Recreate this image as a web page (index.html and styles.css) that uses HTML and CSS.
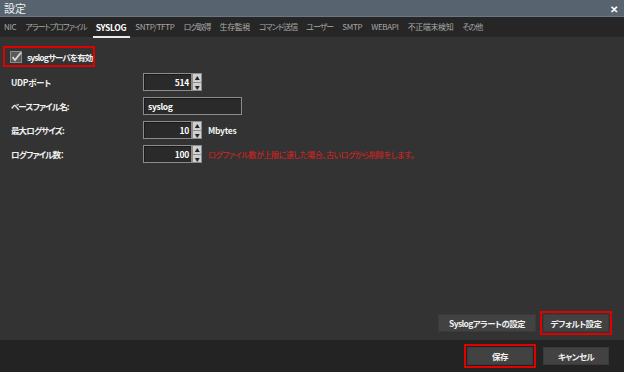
FILE: index.html
```html
<!DOCTYPE html>
<html lang="ja">
<head>
    <meta charset="UTF-8">
    <title>設定</title>
    <link rel="stylesheet" href="styles.css">
</head>
<body>
    <div class="dialog">
        <div class="titlebar">
            <span class="title">設定</span>
            <span class="close">✕</span>
        </div>
        <div class="tabs">
            <span class="tab">NIC</span>
            <span class="tab jp">アラートプロファイル</span>
            <span class="tab active">SYSLOG</span>
            <span class="tab">SNTP/TFTP</span>
            <span class="tab jp">ログ取得</span>
            <span class="tab kanji">生存監視</span>
            <span class="tab jp">コマンド送信</span>
            <span class="tab jp">ユーザー</span>
            <span class="tab">SMTP</span>
            <span class="tab">WEBAPI</span>
            <span class="tab kanji">不正端末検知</span>
            <span class="tab jp">その他</span>
        </div>
        <div class="content">
            <div class="enable mark">
                <span class="check">
                    <svg width="12" height="12" viewBox="0 0 12 12">
                        <rect x="0.5" y="0.5" width="11" height="11" fill="#5a5a5a" stroke="#8a8a8a"/>
                        <path d="M2.5 6.2 L5 9 L11 1.5" fill="none" stroke="#d8d8d8" stroke-width="1.8"/>
                    </svg>
                </span>
                <span class="jp">syslogサーバを有効</span>
            </div>
            <div class="form">
                <div class="row">
                    <label>UDPポート</label>
                    <div class="spin"><span class="num">514</span><span class="arrows"><i>▲</i><i>▼</i></span></div>
                </div>
                <div class="row">
                    <label class="jp">ベースファイル名:</label>
                    <div class="text">syslog</div>
                </div>
                <div class="row">
                    <label class="jp">最大ログサイズ:</label>
                    <div class="spin"><span class="num">10</span><span class="arrows"><i>▲</i><i>▼</i></span></div>
                    <span class="unit">Mbytes</span>
                </div>
                <div class="row">
                    <label class="jp">ログファイル数：</label>
                    <div class="spin"><span class="num">100</span><span class="arrows"><i>▲</i><i>▼</i></span></div>
                    <span class="note">ログファイル数が上限に達した場合、古いログから削除をします。</span>
                </div>
            </div>
            <div class="actions">
                <button class="btn wide">Syslogアラートの設定</button>
                <span class="mark"><button class="btn">デフォルト設定</button></span>
            </div>
        </div>
        <div class="footer">
            <span class="mark"><button class="btn">保存</button></span>
            <button class="btn">キャンセル</button>
        </div>
    </div>
</body>
</html>
```

FILE: styles.css
```css
* {box-sizing: border-box}
body {margin: 0; width: 624px; height: 372px; overflow: hidden; background: #333; font-family: "Noto Sans CJK JP", "Liberation Sans", sans-serif; font-size: 8.5px; font-feature-settings: "palt"; letter-spacing: -0.3px; color: #e8e8e8; white-space: nowrap}
.jp {letter-spacing: -0.9px}
.dialog {display: flex; flex-direction: column; height: 372px}
.titlebar {height: 17px; background: #57636f; display: flex; align-items: center; justify-content: space-between; padding: 0 6px 0 4px; border-bottom: 1px solid #6a7682}
.title {font-size: 11px; color: #f0f0f0; letter-spacing: 0}
.close {font-size: 10px; font-weight: bold; color: #fff}
.tabs {height: 20px; background: #262626; display: flex; align-items: center; gap: 9px; padding: 0 4px; color: #a8a8a8; font-size: 8px}
.tab {position: relative; line-height: 14px}
.tab.jp {letter-spacing: -1px}
.tab.kanji {letter-spacing: -0.4px}
.tab.active {color: #fff; font-weight: bold; font-size: 8.5px}
.tab.active::after {content: ""; position: absolute; left: -3px; right: -4px; bottom: -4px; height: 2px; background: #e8e8e8}
.content {flex: 1; background: #333; padding: 9px 12px 5px 3px; display: flex; flex-direction: column}
.mark {border: 2px solid #e00000; display: inline-flex; align-items: center; padding: 1px}
.enable {width: 92px; height: 21px; padding-left: 5px; gap: 5px; font-weight: bold; color: #f0f0f0}
.check {display: flex}
.form {padding: 6px 0 0 8px; display: flex; flex-direction: column; gap: 6px}
.row {display: flex; align-items: center; height: 18px}
.row label {width: 132px; font-weight: bold; color: #f0f0f0}
.spin {display: flex; height: 18px}
.num {width: 49px; background: #2a2a2a; border: 1px solid #8c8c8c; box-shadow: inset 1px 1px 0 #1a1a1a; text-align: right; padding-right: 2px; line-height: 16px; font-weight: bold; color: #fff}
.arrows {width: 10px; display: flex; flex-direction: column; background: #d0d0d0; border: 1px solid #8c8c8c}
.arrows i {flex: 1; font-style: normal; font-size: 5px; line-height: 8px; text-align: center; color: #222}
.arrows i + i {border-top: 1px solid #8c8c8c}
.text {width: 99px; height: 18px; background: #2a2a2a; border: 1px solid #8c8c8c; box-shadow: inset 1px 1px 0 #1a1a1a; padding-left: 4px; line-height: 16px; font-weight: bold; color: #fff}
.unit {margin-left: 6px; font-weight: bold; color: #f0f0f0}
.note {margin-left: 6px; color: #e02020; font-size: 8px; letter-spacing: -0.4px}
.actions {margin-top: auto; display: flex; justify-content: flex-end; align-items: center; gap: 4px}
.btn {font-family: inherit; font-size: 8.5px; font-feature-settings: "palt"; letter-spacing: -0.6px; font-weight: bold; color: #f0f0f0; background: #424242; border: 1px solid #3a3a3a; height: 18px; width: 66px; cursor: pointer; padding: 0}
.btn.wide {width: 98px}
.actions .mark, .footer .mark {padding: 1px}
.footer {height: 32px; background: #232323; display: flex; justify-content: flex-end; align-items: center; gap: 7px; padding: 0 15px 0 0}
```
